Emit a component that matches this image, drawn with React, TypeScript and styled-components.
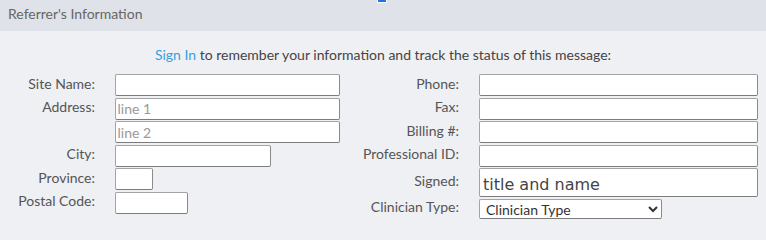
import React, { FC } from 'react'
import styled, { createGlobalStyle } from 'styled-components'

const GlobalStyle = createGlobalStyle`
  html, body {
    margin: 0;
    padding: 0;
    height: 222px;
    overflow: hidden;
    background: #eff0f4;
    font-family: Lato, "Open Sans", sans-serif;
  }
`;

interface Field {
  label: string;
  width?: number;
  tall?: boolean;
  placeholder?: string;
  value?: string;
  select?: string;
}

const leftFields: Field[] = [
  { label: "Site Name:", width: 225 },
  { label: "Address:", width: 225, placeholder: "line 1" },
  { label: "", width: 225, placeholder: "line 2" },
  { label: "City:", width: 156 },
  { label: "Province:", width: 38 },
  { label: "Postal Code:", width: 73 },
];

const rightFields: Field[] = [
  { label: "Phone:" },
  { label: "Fax:" },
  { label: "Billing #:" },
  { label: "Professional ID:" },
  { label: "Signed:", tall: true, value: "title and name" },
  { label: "Clinician Type:", select: "Clinician Type" },
];

const FieldList: FC<{ fields: Field[] }> = ({ fields }) => (
  <>
    {fields.map((f, i) => (
      <React.Fragment key={i}>
        <Label>{f.label}</Label>
        {f.select ? (
          <Select defaultValue={f.select}>
            <option>{f.select}</option>
          </Select>
        ) : f.tall ? (
          <SignedInput defaultValue={f.value} />
        ) : (
          <TextInput fieldWidth={f.width} placeholder={f.placeholder} />
        )}
      </React.Fragment>
    ))}
  </>
);

const App: FC = () => (
  <>
    <GlobalStyle />
    <Panel>
      <FocusMark />
      <Header>Referrer's Information</Header>
      <Body>
        <Intro>
          <SignInLink href="#">Sign In</SignInLink> to remember your information and track the status of this message:
        </Intro>
        <Columns>
          <LeftGrid>
            <FieldList fields={leftFields} />
          </LeftGrid>
          <RightGrid>
            <FieldList fields={rightFields} />
          </RightGrid>
        </Columns>
      </Body>
    </Panel>
  </>
);

export default App;

const Panel = styled.div`
  position: relative;
  width: 766px;
  height: 222px;
  overflow: hidden;
  background: #eff0f4;
`;

const FocusMark = styled.div`
  position: absolute;
  left: 377px;
  top: -2px;
  width: 8px;
  height: 3px;
  background: #1a73e8;
  border: 1px solid #fff;
`;

const Header = styled.div`
  height: 31px;
  box-sizing: border-box;
  padding: 6px 8px;
  background: #dfe2e9;
  color: #666;
  font-size: 14px;
  line-height: 16px;
`;

const Body = styled.div`
  padding-top: 16px;
`;

const Intro = styled.div`
  text-align: center;
  font-size: 14px;
  line-height: 16px;
  color: #444;
  margin-bottom: 11px;
`;

const SignInLink = styled.a`
  color: #3a9fdb;
  text-decoration: none;
`;

const Columns = styled.div`
  display: flex;
  align-items: flex-start;
`;

const FormGrid = styled.div`
  display: grid;
  row-gap: 1.5px;
  align-items: center;
`;

const LeftGrid = styled(FormGrid)`
  grid-template-columns: 95px auto;
  grid-template-rows: repeat(6, 22px);
  column-gap: 19.5px;
  width: 345px;
`;

const RightGrid = styled(FormGrid)`
  grid-template-columns: 114px 279px;
  grid-template-rows: repeat(4, 22px) 29px 20.5px;
  column-gap: 20px;
`;

const Label = styled.div`
  text-align: right;
  font-size: 14px;
  line-height: 16px;
  color: #555;
  margin-top: -3px;
  white-space: nowrap;
`;

const inputBase = `
  box-sizing: border-box;
  margin: 0;
  background: #fff;
  border: 1px solid #a4a4a4;
  border-right-color: #8a8a8a;
  border-bottom-color: #7c7c7c;
  border-radius: 2px;
  outline: none;
`;

const TextInput = styled.input<{ fieldWidth?: number }>`
  ${inputBase}
  width: ${({ fieldWidth }) => (fieldWidth ? `${fieldWidth}px` : '100%')};
  height: 22px;
  padding: 0 2px;
  font-family: Lato, sans-serif;
  font-size: 14px;
  color: #333;

  &::placeholder {
    color: #999;
  }
`;

const SignedInput = styled.input`
  ${inputBase}
  width: 100%;
  height: 29px;
  padding: 3px 3px 0;
  font-family: "Comic Sans MS", "DejaVu Sans", sans-serif;
  font-size: 16px;
  color: #444;
`;

const Select = styled.select`
  ${inputBase}
  width: 183px;
  height: 20.5px;
  padding: 0 2px;
  font-family: Lato, sans-serif;
  font-size: 14px;
  color: #333;
`;
